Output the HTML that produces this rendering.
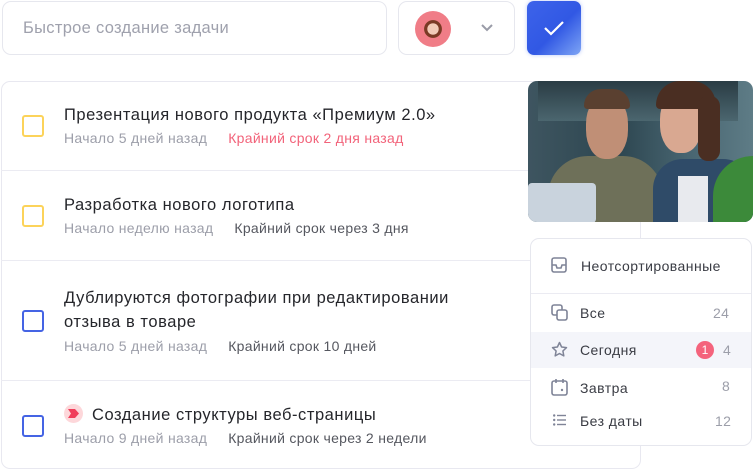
<!DOCTYPE html><html><head><meta charset="utf-8"><style>
*{box-sizing:border-box;margin:0;padding:0}
body{width:753px;height:470px;background:#fff;font-family:"Liberation Sans",sans-serif;position:relative;overflow:hidden;color:#25262b}
.abs{position:absolute}
.input{left:2px;top:1px;width:385px;height:54px;border:1px solid #e6e7ee;border-radius:9px;font-size:16.5px;letter-spacing:.3px;color:#9fa1ad;padding:17px 0 0 20px}
.dd{left:398px;top:1px;width:117px;height:54px;border:1px solid #e6e7ee;border-radius:9px}
.btn{left:527px;top:1px;width:54px;height:54px;border-radius:7px;background:linear-gradient(135deg,#3d63ea 0%,#3158e4 55%,#7ea5f5 100%);box-shadow:0 0 4px rgba(80,120,240,.4)}
.list{left:1px;top:81px;width:640px;height:388px;border:1px solid #e8e8f0;border-radius:9px}
.sep{left:1px;width:640px;height:1px;background:#ebebf2}
.cb{width:22px;height:22px;border:2.5px solid #fcd35a;border-radius:3px;left:22px}
.cb.b{border-color:#4564e4}
.t{left:64px;font-size:16.5px;letter-spacing:.55px;color:#25262b;line-height:24px;white-space:nowrap}
.m{left:64px;font-size:14px;letter-spacing:.3px;color:#9c9ea9;white-space:nowrap}
.m span{margin-left:21px;color:#55575f}
.m span.r{color:#f2637a}
.menu{left:530px;top:238px;width:222px;height:208px;border:1px solid #e6e7ee;border-radius:9px;background:#fff}
.mi{left:580px;font-size:14px;letter-spacing:.45px;color:#3a3c44}
.n{font-size:14px;letter-spacing:.4px;color:#9c9ea9}
</style></head><body>
<div class="abs input">Быстрое создание задачи</div>
<div class="abs dd">
 <div class="abs" style="left:16px;top:9px;width:36px;height:36px;border-radius:50%;background:radial-gradient(ellipse at 50% 50%,#f1cbb8 0 22%,#7a3a25 23% 34%,#f07d87 36%)"></div>
 <svg class="abs" style="left:82px;top:22px" width="12" height="8"><path d="M1 1l5 5 5-5" stroke="#9a9ca8" stroke-width="2" fill="none"/></svg>
</div>
<div class="abs btn"><svg class="abs" style="left:16px;top:19px" width="22" height="16"><path d="M2 8l6 6L20 2" stroke="#fff" stroke-width="2.2" fill="none"/></svg></div>

<div class="abs list"></div>
<div class="abs sep" style="top:170px"></div>
<div class="abs sep" style="top:260px"></div>
<div class="abs sep" style="top:380px"></div>

<div class="abs cb" style="top:115px"></div>
<div class="abs t" style="top:103px">Презентация нового продукта «Премиум 2.0»</div>
<div class="abs m" style="top:130px">Начало 5 дней назад<span class="r">Крайний срок 2 дня назад</span></div>

<div class="abs cb" style="top:205px"></div>
<div class="abs t" style="top:193px">Разработка нового логотипа</div>
<div class="abs m" style="top:220px">Начало неделю назад<span>Крайний срок через 3 дня</span></div>

<div class="abs cb b" style="top:310px"></div>
<div class="abs t" style="top:286px">Дублируются фотографии при редактировании<br>отзыва в товаре</div>
<div class="abs m" style="top:338px">Начало 5 дней назад<span>Крайний срок 10 дней</span></div>

<div class="abs cb b" style="top:415px"></div>
<div class="abs" style="left:64px;top:404px;width:19px;height:19px;border-radius:50%;background:#fdd7da"><svg class="abs" style="left:4px;top:5px" width="12" height="9"><path d="M0 0h7l4 4.5L7 9H0l3-4.5z" fill="#f03e5a"/></svg></div>
<div class="abs t" style="left:92px;top:403px">Создание структуры веб-страницы</div>
<div class="abs m" style="top:430px">Начало 9 дней назад<span>Крайний срок через 2 недели</span></div>

<div class="abs" style="left:528px;top:81px;width:225px;height:141px;border-radius:9px;overflow:hidden;background:linear-gradient(90deg,#3e5560 0%,#2d4650 40%,#476470 70%,#5e7c86 100%)">
 <div class="abs" style="left:10px;top:0;width:200px;height:40px;background:linear-gradient(#2a3c44,#4b666f)"></div>
 <div class="abs" style="left:20px;top:75px;width:115px;height:90px;border-radius:40px 40px 0 0;background:#6e7059"></div>
 <div class="abs" style="left:58px;top:14px;width:42px;height:64px;border-radius:45%;background:#c08f76"></div>
 <div class="abs" style="left:56px;top:8px;width:46px;height:20px;border-radius:20px 20px 4px 4px;background:#5a4030"></div>
 <div class="abs" style="left:125px;top:78px;width:100px;height:70px;border-radius:30px 30px 0 0;background:#2f4b68"></div>
 <div class="abs" style="left:150px;top:95px;width:30px;height:50px;background:#e8eaee"></div>
 <div class="abs" style="left:132px;top:10px;width:42px;height:62px;border-radius:45%;background:#d9a891"></div>
 <div class="abs" style="left:128px;top:0px;width:60px;height:28px;border-radius:30px 30px 5px 5px;background:#4a2e22"></div>
 <div class="abs" style="left:170px;top:15px;width:22px;height:65px;border-radius:10px;background:#4a2e22"></div>
 <div class="abs" style="left:0;top:102px;width:68px;height:40px;border-radius:4px;background:#c9d3dd"></div>
 <div class="abs" style="left:185px;top:75px;width:45px;height:70px;border-radius:40px 0 0 0;background:#3c8a3a"></div>
</div>

<div class="abs menu"></div>
<div class="abs" style="left:531px;top:293px;width:220px;height:1px;background:#ebebf2"></div>
<div class="abs" style="left:531px;top:332px;width:220px;height:36px;background:#f4f5fa"></div>
<svg class="abs" style="left:551px;top:257px" width="16" height="16"><rect x="1" y="1" width="14" height="14" rx="2" fill="none" stroke="#7f8497" stroke-width="1.6"/><path d="M1 8h4l1 3h4l1-3h4" fill="none" stroke="#7f8497" stroke-width="1.6"/></svg>
<div class="abs mi" style="left:581px;top:258px">Неотсортированные</div>
<svg class="abs" style="left:551px;top:304px" width="17" height="17"><rect x="1" y="1" width="10" height="10" rx="2" fill="none" stroke="#7f8497" stroke-width="1.6"/><rect x="6" y="6" width="10" height="10" rx="2" fill="#fff" stroke="#7f8497" stroke-width="1.6"/></svg>
<div class="abs mi" style="top:305px">Все</div><div class="abs n" style="left:713px;top:305px">24</div>
<svg class="abs" style="left:551px;top:341px" width="17" height="17"><path d="M8.5 1.5l2.1 4.5 4.9.6-3.6 3.4.9 4.9-4.3-2.4-4.3 2.4.9-4.9L1.5 6.6l4.9-.6z" fill="none" stroke="#7f8497" stroke-width="1.5" stroke-linejoin="round"/></svg>
<div class="abs mi" style="top:342px">Сегодня</div>
<div class="abs" style="left:696px;top:341px;width:18px;height:18px;border-radius:50%;background:#f4637c;color:#fff;font-size:12px;text-align:center;line-height:18px">1</div>
<div class="abs n" style="left:723px;top:342px">4</div>
<svg class="abs" style="left:551px;top:378px" width="17" height="18"><rect x="1" y="3" width="15" height="14" rx="2" fill="none" stroke="#7f8497" stroke-width="1.6"/><path d="M5 1v4M12 1v4" stroke="#7f8497" stroke-width="1.6"/><circle cx="11" cy="12" r="1.2" fill="#7f8497"/></svg>
<div class="abs mi" style="top:380px">Завтра</div><div class="abs n" style="left:722px;top:378px">8</div>
<svg class="abs" style="left:553px;top:414px" width="14" height="12"><g fill="#7f8497"><circle cx="1.2" cy="1.5" r="1.2"/><circle cx="1.2" cy="6" r="1.2"/><circle cx="1.2" cy="10.5" r="1.2"/><rect x="4" y="0.8" width="9" height="1.4"/><rect x="4" y="5.3" width="9" height="1.4"/><rect x="4" y="9.8" width="9" height="1.4"/></g></svg>
<div class="abs mi" style="top:413px">Без даты</div><div class="abs n" style="left:715px;top:413px">12</div>
</body></html>
